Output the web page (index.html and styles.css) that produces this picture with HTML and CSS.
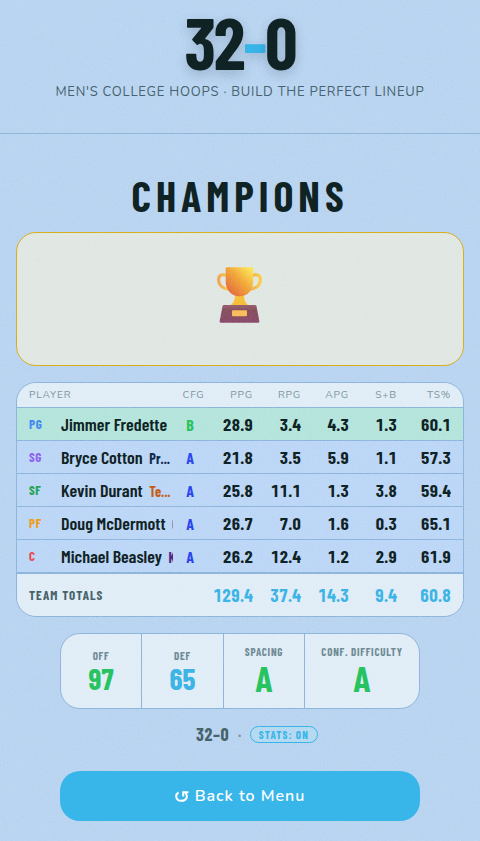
FILE: index.html
```
<!DOCTYPE html>
<html lang="en">
<head>
  <meta charset="UTF-8">
  <meta name="viewport" content="width=device-width, initial-scale=1.0">
  <title>32-0</title>
  <link rel="stylesheet" href="styles.css">
</head>
<body>
  <header class="header">
    <h1 class="logo">32<span class="dash">-</span>0</h1>
    <p class="tagline">MEN'S COLLEGE HOOPS · BUILD THE PERFECT LINEUP</p>
  </header>

  <main>
    <h2 class="title">CHAMPIONS</h2>

    <div class="trophy-card">
      <svg class="trophy" width="46" height="58" viewBox="0 0 46 58">
        <defs>
          <linearGradient id="cup" x1="0.1" y1="0.75" x2="0.8" y2="0">
            <stop offset="0" stop-color="#e5733f"/>
            <stop offset="0.5" stop-color="#f2a73a"/>
            <stop offset="1" stop-color="#fbe458"/>
          </linearGradient>
          <linearGradient id="handle" x1="0" y1="0" x2="1" y2="0">
            <stop offset="0" stop-color="#efa85c"/>
            <stop offset="1" stop-color="#fbcf45"/>
          </linearGradient>
          <linearGradient id="base" x1="0" y1="0" x2="0" y2="1">
            <stop offset="0" stop-color="#98606d"/>
            <stop offset="0.3" stop-color="#87505f"/>
            <stop offset="1" stop-color="#8b4c6c"/>
          </linearGradient>
        </defs>
        <g fill="none" stroke="url(#handle)" stroke-width="3.2">
          <path d="M10 10 C6 7 1.600 9 1.600 13.500 C1.600 19 6 23 12 23"/>
          <path d="M35 10 C39 7 43.400 9 43.400 13.500 C43.400 19 39 23 33 23"/>
        </g>
        <path fill="#f6bf3c" d="M18 28 h9 c0 6 1 8.500 5 11.500 h-19 c4 -3 5 -5.500 5 -11.500z"/>
        <path fill="url(#cup)" d="M8.700 2.300 q0 -1 1 -1 h25.600 q1 0 1 1 v13.500 c0 8.500 -6 14.500 -13.800 14.500 s-13.800 -6 -13.800 -14.500z"/>
        <path fill="url(#base)" d="M7 39 h31 q1.200 0 1.500 1.200 l2.900 15 q.2 1.500 -1.200 1.500 h-37.400 q-1.400 0 -1.200 -1.500 l2.900 -15 q.3 -1.200 1.500 -1.200z"/>
        <rect x="15" y="44.300" width="15" height="6" rx="1" fill="#f9bd5c"/>
      </svg>
    </div>

    <table class="stats">
      <colgroup>
        <col class="c-pos"><col class="c-name"><col class="c-cfg"><col class="c-ppg"><col class="c-num"><col class="c-num"><col class="c-num"><col class="c-ts">
      </colgroup>
      <thead>
        <tr><th colspan="2" class="left">PLAYER</th><th class="cfg">CFG</th><th>PPG</th><th>RPG</th><th>APG</th><th>S+B</th><th>TS%</th></tr>
      </thead>
      <tbody>
        <tr class="best"><td class="pos pg">PG</td><td class="name">Jimmer Fredette</td><td class="cfg b">B</td><td>28.9</td><td>3.4</td><td>4.3</td><td>1.3</td><td>60.1</td></tr>
        <tr><td class="pos sg">SG</td><td class="name">Bryce Cotton <small class="prov">Pr...</small></td><td class="cfg">A</td><td>21.8</td><td>3.5</td><td>5.9</td><td>1.1</td><td>57.3</td></tr>
        <tr><td class="pos sf">SF</td><td class="name">Kevin Durant <small class="texas">Te...</small></td><td class="cfg">A</td><td>25.8</td><td>11.1</td><td>1.3</td><td>3.8</td><td>59.4</td></tr>
        <tr><td class="pos pf">PF</td><td class="name">Doug McDermott <small class="creighton">C</small></td><td class="cfg">A</td><td>26.7</td><td>7.0</td><td>1.6</td><td>0.3</td><td>65.1</td></tr>
        <tr><td class="pos c">C</td><td class="name">Michael Beasley <small class="kstate">K</small></td><td class="cfg">A</td><td>26.2</td><td>12.4</td><td>1.2</td><td>2.9</td><td>61.9</td></tr>
      </tbody>
      <tfoot>
        <tr><td colspan="3" class="left">TEAM TOTALS</td><td>129.4</td><td>37.4</td><td>14.3</td><td>9.4</td><td>60.8</td></tr>
      </tfoot>
    </table>

    <div class="ratings">
      <div class="rating"><span class="label">OFF</span><span class="value green">97</span></div>
      <div class="rating"><span class="label">DEF</span><span class="value blue">65</span></div>
      <div class="rating"><span class="label">SPACING</span><span class="value grade green">A</span></div>
      <div class="rating"><span class="label">CONF. DIFFICULTY</span><span class="value grade green">A</span></div>
    </div>

    <div class="record">
      <span class="score">32–0</span>
      <span class="dot">·</span>
      <span class="pill">STATS: ON</span>
    </div>

    <button class="menu-btn">
      <svg width="14" height="11" viewBox="0 0 14 11" fill="none" stroke="#fff" stroke-width="2">
        <path d="M3.500 1.300 C-0.200 3.800 0.600 9.800 6.300 9.800 C12 9.800 13.200 5 10.300 1.800"/>
        <path d="M13.500 1.300 H8.200 V5.600"/>
      </svg>
      Back to Menu
    </button>
  </main>

  <!-- paper grain over the whole page -->
  <svg class="grain" width="100%" height="100%">
    <filter id="noise" color-interpolation-filters="sRGB">
      <feTurbulence type="fractalNoise" baseFrequency="0.8" numOctaves="4" stitchTiles="stitch"/>
      <feColorMatrix type="saturate" values="0"/>
    </filter>
    <rect width="100%" height="100%" filter="url(#noise)"/>
  </svg>
</body>
</html>
```
FILE: styles.css
```
* {
  box-sizing: border-box;
}
body {
  margin: 0;
  height: 841px;
  overflow: hidden;
  background: #bad5f1;
  color: #0f2224;
  font-family: Nunito, "Open Sans", sans-serif;
}
.logo,
.title,
.stats td,
.ratings,
.record {
  font-family: "Barlow Condensed", "Roboto Condensed", Roboto, sans-serif;
  font-weight: 700;
}
.header {
  height: 134px;
  padding-top: 5px;
  border-bottom: 1px solid #8fb6dc;
  text-align: center;
}
.logo {
  margin: 0;
  font-size: 72px;
  line-height: 73px;
  letter-spacing: -2.16px;
  text-shadow: 0 4px 12px rgba(15, 34, 60, 0.2);
}
.logo .dash {
  color: #38b4e8;
}
.tagline {
  margin: 5px 0 0;
  font-size: 13px;
  line-height: 18px;
  letter-spacing: 0.78px;
  color: #46626e;
}
main {
  display: flex;
  flex-direction: column;
  align-items: center;
  padding: 35px 16px 0;
}
.title {
  margin: 0;
  height: 63px;
  font-size: 42px;
  line-height: 52px;
  letter-spacing: 5px;
}
.trophy-card {
  width: 100%;
  height: 134px;
  display: flex;
  justify-content: center;
  padding: 33px 0 0;
  border: 1px solid #d9ae1c;
  border-radius: 20px;
  background: #e1e8e4;
}
.stats {
  width: 100%;
  height: 235px;
  margin-top: 16px;
  table-layout: fixed;
  border: 1px solid #8fb6dc;
  border-radius: 20px;
  border-collapse: separate;
  border-spacing: 0;
  overflow: hidden;
  background: #bdd7f7;
  font-variant-numeric: tabular-nums;
}
.c-pos { width: 44px; }
.c-name { width: 112px; }
.c-cfg { width: 34px; }
.c-ppg { width: 58px; }
.c-num { width: 48px; }
.c-ts { width: 54px; }
.stats th,
.stats td {
  padding: 0 12px 0 0;
  text-align: right;
  white-space: nowrap;
}
.stats th {
  height: 25px;
  padding-bottom: 1px;
  background: #e1edf7;
  border-bottom: 1px solid #8fb6dc;
  font-size: 10.2px;
  font-weight: 400;
  letter-spacing: 0.82px;
  color: #7d969d;
}
.stats tbody td {
  height: 33px;
  border-bottom: 1px solid #8fb6dc;
  font-size: 17.6px;
  font-weight: 700;
}
.stats tbody tr:last-child td {
  height: 34px;
  border-bottom-width: 2px;
}
.stats .best td {
  background: #b5e5dc;
}
.stats .left,
.stats tbody .pos {
  padding-left: 12px;
  padding-right: 0;
  text-align: left;
}
.stats tbody .pos {
  font-size: 13px;
  font-weight: 700;
  letter-spacing: 0.6px;
}
.stats tbody .name {
  padding: 0;
  text-align: left;
  font-size: 18px;
  font-weight: 600;
  overflow: hidden;
}
.name small {
  margin-left: 3px;
  font-size: 14.2px;
  font-weight: 700;
}
.stats .cfg {
  padding: 0;
  text-align: center;
}
.stats th.cfg {
  padding: 0 0 1px 7px;
}
.stats tbody td.cfg {
  font-size: 16px;
  color: #2b45f0;
}
.stats tbody td.b { color: #28c25c; }
.stats .pg { color: #4287f0; }
.stats .sg { color: #8d60f0; }
.stats .sf { color: #22a350; }
.stats .pf { color: #f09c18; }
.stats .c { color: #ec4848; }
.prov { color: #10294f; }
.texas { color: #c65b14; }
.creighton { color: #2456a8; }
.kstate { color: #512888; }
.stats tfoot td {
  height: 42px;
  background: #e1edf7;
  font-size: 18px;
  color: #3cb4e6;
}
.stats tfoot .left {
  font-size: 13px;
  letter-spacing: 1.04px;
  color: #46626a;
}
.ratings {
  display: grid;
  grid-template-columns: 80px 82px 81px 1fr;
  width: 360px;
  height: 76px;
  margin-top: 16px;
  border: 1px solid #8fb6dc;
  border-radius: 20px;
  background: #e1edf7;
}
.rating {
  display: flex;
  flex-direction: column;
  align-items: center;
  justify-content: center;
  padding-top: 1px;
}
.rating + .rating {
  border-left: 1px solid #8fb6dc;
}
.label {
  font-size: 11px;
  line-height: 14px;
  letter-spacing: 0.75px;
  color: #6f8b93;
}
.value {
  padding-bottom: 2px;
  font-size: 29.5px;
  line-height: 30px;
}
.grade {
  font-size: 36px;
  line-height: 38px;
}
.green { color: #26c35f; }
.blue { color: #3cb4e6; }
.record {
  display: flex;
  align-items: center;
  gap: 8.5px;
  height: 17px;
  margin-top: 17px;
  padding-left: 34px;
  color: #7d969d;
}
.score {
  font-size: 18px;
  line-height: 17px;
  letter-spacing: 0.6px;
  color: #46626a;
}
.dot {
  line-height: 15px;
  padding-bottom: 2px;
}
.pill {
  height: 17px;
  padding: 0 8px;
  border: 1px solid #38b4e8;
  border-radius: 9px;
  background: #b5daf2;
  font-size: 11px;
  line-height: 16px;
  letter-spacing: 1.1px;
  color: #38b4e8;
}
.menu-btn {
  position: relative;
  z-index: 1;
  display: flex;
  align-items: center;
  justify-content: center;
  gap: 6px;
  width: 360px;
  height: 50px;
  margin-top: 28px;
  border: none;
  border-radius: 20px;
  background: #38b5e9;
  color: #fff;
  font-family: Nunito, "Open Sans", sans-serif;
  font-size: 16px;
  font-weight: 600;
  letter-spacing: 0.96px;
  cursor: pointer;
}
.grain {
  position: fixed;
  inset: 0;
  opacity: 0.35;
  mix-blend-mode: overlay;
  pointer-events: none;
}
```
